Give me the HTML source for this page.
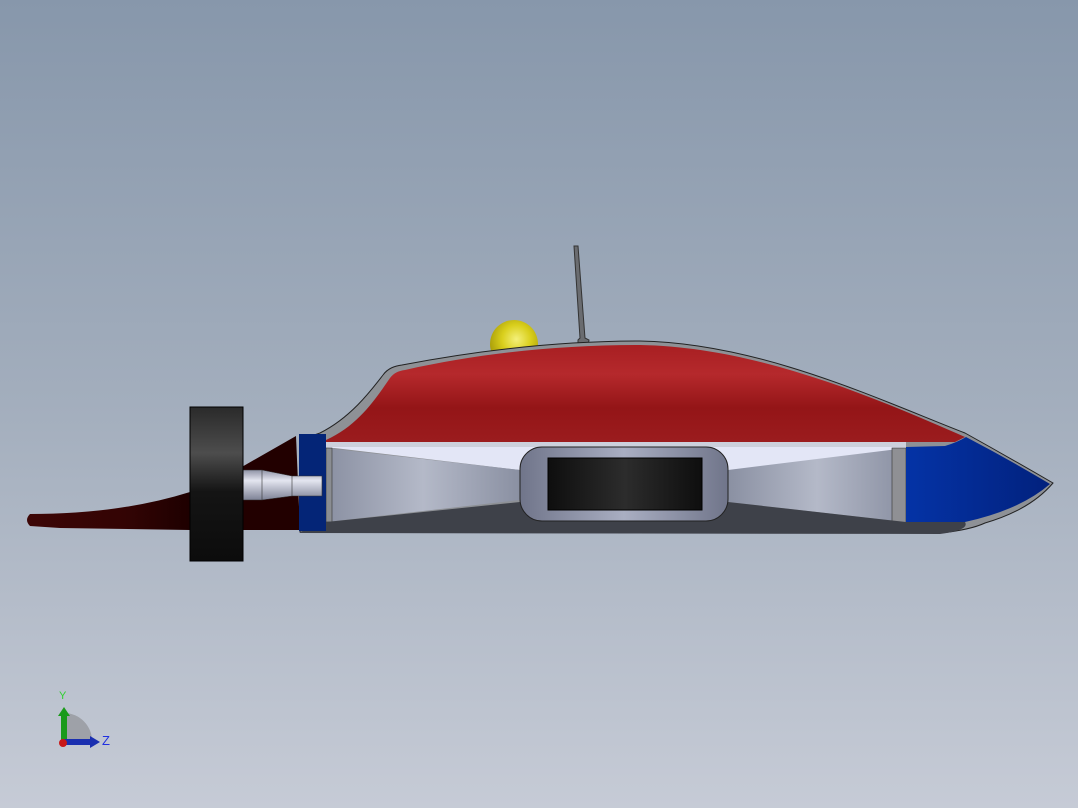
<!DOCTYPE html>
<html><head><meta charset="utf-8"><style>
html,body{margin:0;padding:0;width:1078px;height:808px;overflow:hidden}
svg{display:block}
</style></head><body>
<svg width="1078" height="808" viewBox="0 0 1078 808" xmlns="http://www.w3.org/2000/svg">
<defs>
<linearGradient id="bg" x1="0" y1="0" x2="0" y2="1">
<stop offset="0" stop-color="#8797ab"/><stop offset="0.5" stop-color="#a3aebd"/><stop offset="1" stop-color="#c6cbd6"/></linearGradient>
<linearGradient id="red" x1="0" y1="0" x2="0" y2="1">
<stop offset="0" stop-color="#a81f22"/><stop offset="0.3" stop-color="#b5292c"/><stop offset="0.65" stop-color="#941517"/><stop offset="1" stop-color="#9b1c1e"/></linearGradient>
<linearGradient id="wheel" x1="0" y1="0" x2="0" y2="1">
<stop offset="0" stop-color="#2a2a2a"/><stop offset="0.3" stop-color="#4d4d4d"/><stop offset="0.55" stop-color="#141414"/><stop offset="1" stop-color="#0c0c0c"/></linearGradient>
<linearGradient id="inner" x1="0" y1="0" x2="1" y2="0">
<stop offset="0" stop-color="#8a90a2"/><stop offset="0.5" stop-color="#b4b9c8"/><stop offset="1" stop-color="#8a90a2"/></linearGradient>
<linearGradient id="shaft" x1="0" y1="0" x2="0" y2="1">
<stop offset="0" stop-color="#8f93a6"/><stop offset="0.35" stop-color="#e4e6f0"/><stop offset="1" stop-color="#7e8296"/></linearGradient>
<linearGradient id="blk" x1="0" y1="0" x2="1" y2="0">
<stop offset="0" stop-color="#0e0e0e"/><stop offset="0.5" stop-color="#2c2c2c"/><stop offset="1" stop-color="#0e0e0e"/></linearGradient>
<linearGradient id="win" x1="0" y1="0" x2="1" y2="0">
<stop offset="0" stop-color="#70758a"/><stop offset="0.5" stop-color="#a9aec2"/><stop offset="1" stop-color="#70758a"/></linearGradient>
<linearGradient id="nose" x1="0" y1="0" x2="1" y2="0">
<stop offset="0" stop-color="#0433a6"/><stop offset="1" stop-color="#02217d"/></linearGradient>
<linearGradient id="tail" x1="0" y1="0" x2="1" y2="0">
<stop offset="0" stop-color="#3d0606"/><stop offset="0.6" stop-color="#330404"/><stop offset="1" stop-color="#1e0000"/></linearGradient>
<radialGradient id="ball" cx="0.55" cy="0.4" r="0.6">
<stop offset="0" stop-color="#f4f07a"/><stop offset="0.5" stop-color="#d9cf1c"/><stop offset="1" stop-color="#a69a08"/></radialGradient>
</defs>
<rect width="1078" height="808" fill="url(#bg)"/>
<!-- antenna -->
<path d="M574 246 L578 246 L583 312 L585 338 L589 340 L588 346 L578 346 L578 340 L580 338 Z" fill="#6a6c70" stroke="#333" stroke-width="1"/>
<!-- ball -->
<circle cx="514" cy="344" r="24" fill="url(#ball)"/>
<!-- tail -->
<path d="M30 514 Q120 514 190 492 L190 530 L60 528 L30 526 Q24 520 30 514 Z" fill="url(#tail)"/>
<path d="M240 468 L296 436 L300 530 L240 530 Z" fill="#220000"/>
<!-- shell outer -->
<path d="M320 433 C350 418 370 392 383 375 C388 368 395 366 402 365 C480 350 560 341 640 341 C760 343 880 400 965 433 Q1010 458 1053 483 Q1030 510 985 523 Q970 530 940 533 L300 532 L300 440 Z" fill="#8e9196" stroke="#222" stroke-width="1"/>
<!-- red -->
<path d="M326 440 C360 425 378 395 390 378 C394 373 398 371 405 370 C480 353 560 345 640 345 C760 347 880 400 965 437 L955 442 L326 442 Z" fill="url(#red)"/>
<!-- white band -->
<rect x="326" y="442" width="580" height="6" fill="#ccd0dc"/>
<path d="M326 447 L906 447 L906 460 L740 472 L520 470 Z" fill="#e3e6f6"/>
<!-- inner -->
<path d="M326 448 L520 470 L520 500 L326 522 Z" fill="url(#inner)"/>
<path d="M728 470 L906 448 L906 522 L728 502 Z" fill="url(#inner)"/>
<rect x="326" y="448" width="6" height="74" fill="#8a8d92" stroke="#333" stroke-width="0.6"/>
<rect x="892" y="448" width="14" height="75" fill="#8f9094" stroke="#333" stroke-width="0.6"/>
<!-- bottom -->
<path d="M300 532 L326 522 L520 502 L728 502 L906 522 L965 522 Q970 530 940 534 L300 533 Z" fill="#3e4149"/>
<!-- window -->
<rect x="520" y="447" width="208" height="74" rx="22" fill="url(#win)" stroke="#222" stroke-width="1"/>
<rect x="548" y="458" width="154" height="52" fill="url(#blk)" stroke="#000"/>
<!-- nose blue -->
<path d="M906 447 L945 446 Q958 442 966 437 Q1010 460 1050 484 Q1020 510 965 522 L906 522 Z" fill="url(#nose)"/>
<!-- blue band -->
<rect x="299" y="434" width="27" height="97" fill="#042577"/>
<!-- shaft -->
<path d="M243 470 L262 470 L292 476 L322 476 L322 496 L292 496 L262 500 L243 500 Z" fill="url(#shaft)" stroke="#333" stroke-width="0.6"/>
<line x1="262" y1="470" x2="262" y2="500" stroke="#333" stroke-width="0.6"/>
<line x1="292" y1="476" x2="292" y2="496" stroke="#333" stroke-width="0.6"/>
<!-- wheel -->
<rect x="190" y="407" width="53" height="154" fill="url(#wheel)" stroke="#000" stroke-width="1"/>
<!-- triad -->
<path d="M64 713 A28 28 0 0 1 92 741 L64 741 Z" fill="#9ea1a8"/>
<rect x="61" y="714" width="6" height="28" fill="#1a9a1a"/>
<path d="M58 716 L64 707 L70 716 Z" fill="#1a9a1a"/>
<rect x="63" y="739" width="28" height="6" fill="#1a2fb0"/>
<path d="M90 736 L100 742 L90 748 Z" fill="#1a2fb0"/>
<circle cx="63" cy="743" r="4" fill="#c81818"/>
<text x="59" y="699" font-family="Liberation Sans, sans-serif" font-size="11" fill="#2fd12f">Y</text>
<text x="102" y="745" font-family="Liberation Sans, sans-serif" font-size="13" fill="#2030e0">Z</text>
</svg>
</body></html>
